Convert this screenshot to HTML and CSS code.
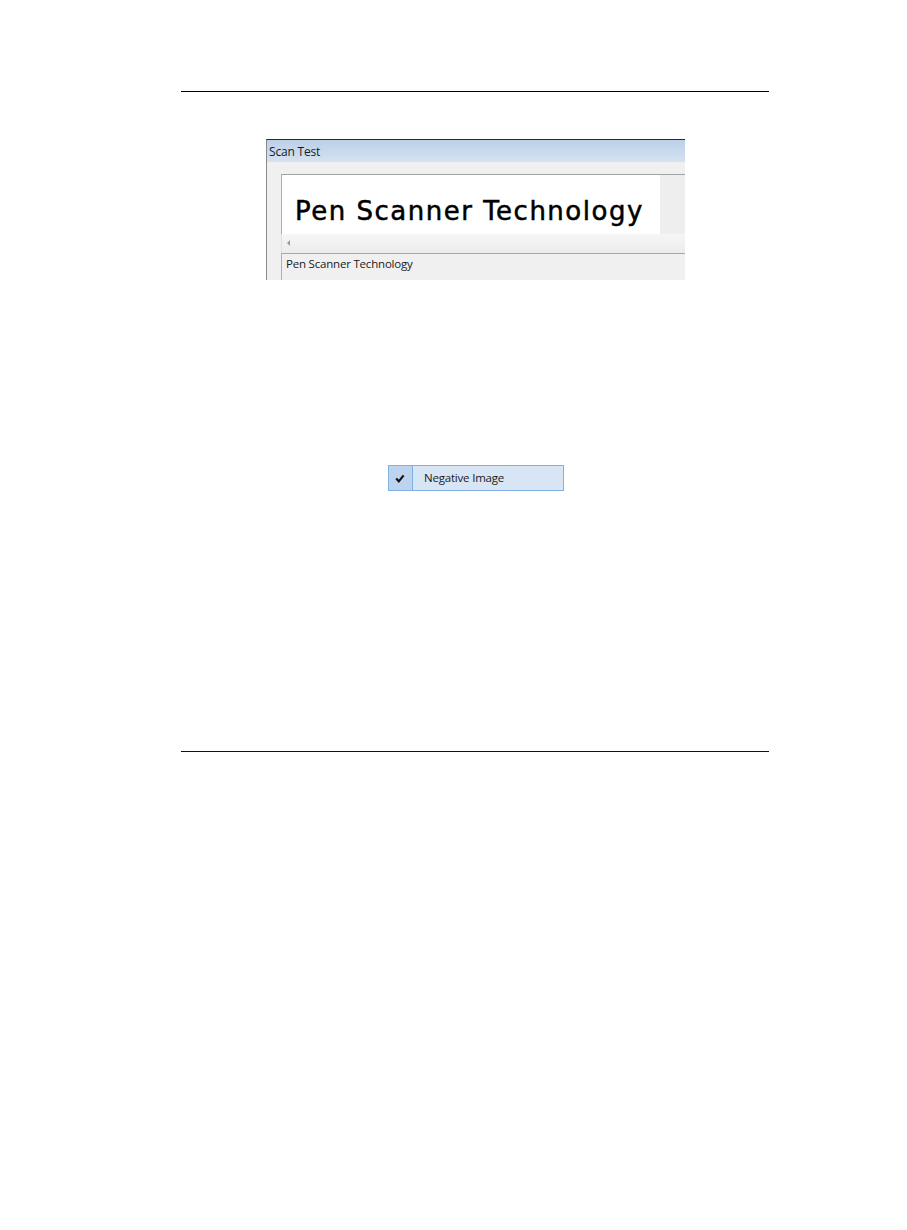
FILE: index.html
```html
<!DOCTYPE html>
<html>
<head>
<meta charset="utf-8">
<link rel="stylesheet" href="styles.css">
</head>
<body>
<div class="page">
  <div class="rule rule-top"></div>
  <div class="shot1">
    <div class="titlebar">Scan Test</div>
    <div class="client">
      <div class="canvas-row">
        <div class="canvas"><span class="bigtext">Pen Scanner Technology</span></div>
        <div class="canvas-rest"></div>
      </div>
      <div class="scrollbar"><span class="arrow"></span></div>
      <div class="result">Pen Scanner Technology</div>
    </div>
  </div>
  <div class="menuitem">
    <div class="check"><svg width="10" height="9" viewBox="0 0 10 9"><path d="M1.2 4.6 L3.8 7.3 L8.6 1.4" fill="none" stroke="#111" stroke-width="2.1"/></svg></div>
    <div class="label">Ne<u>g</u>ative Image</div>
  </div>
  <div class="rule rule-bottom"></div>
</div>
</body>
</html>
```

FILE: styles.css
```css
html, body {
  margin: 0;
  padding: 0;
  background: #fff;
}
.page {
  width: 907px;
  height: 1230px;
  padding-top: 91px;
  box-sizing: border-box;
}
.rule {
  margin-left: 181px;
  width: 588px;
  height: 1px;
  background: #000;
}
.rule-bottom {
  margin-top: 260px;
  background: #14083a;
}
.shot1 {
  margin-top: 47px;
  margin-left: 266px;
  width: 419px;
  height: 141px;
  border-top: 1px solid #2b2b2b;
  border-left: 1px solid #8a8a8a;
  box-sizing: border-box;
  display: flex;
  flex-direction: column;
  overflow: hidden;
}
.titlebar {
  height: 22px;
  box-sizing: border-box;
  padding-top: 2px;
  background: linear-gradient(#bcd0e8, #d5e2f1);
  font-family: "Open Sans", "DejaVu Sans", sans-serif;
  font-size: 12px;
  line-height: 20px;
  color: #1a1a1a;
  padding-left: 2px;
  letter-spacing: -0.2px;
}
.client {
  flex: 1;
  background: #f0f0f0;
  padding-top: 12px;
  padding-left: 14px;
  display: flex;
  flex-direction: column;
}
.canvas-row {
  display: flex;
  height: 59px;
  border-top: 1px solid #a3a3a3;
  border-left: 1px solid #b0b0b0;
}
.canvas {
  width: 378px;
  background: #fff;
  position: relative;
}
.bigtext {
  position: absolute;
  left: 13px;
  top: 21px;
  font-family: "DejaVu Sans", sans-serif;
  font-size: 26px;
  line-height: 30px;
  color: #000;
  letter-spacing: 1.5px;
  white-space: nowrap;
  -webkit-text-stroke: 0.5px #000;
}
.canvas-rest {
  flex: 1;
  background: #eeeeee;
}
.scrollbar {
  height: 19px;
  background: linear-gradient(#f6f6f6, #ececec);
  border-left: 1px solid #e0e0e0;
  position: relative;
}
.arrow {
  position: absolute;
  left: 5px;
  top: 6px;
  width: 0;
  height: 0;
  border-top: 3px solid transparent;
  border-bottom: 3px solid transparent;
  border-right: 3px solid #9a9a9a;
}
.result {
  flex: 1;
  border-top: 1px solid #a8a8a8;
  border-left: 1px solid #b0b0b0;
  background: #f0f0f0;
  font-family: "Open Sans", "DejaVu Sans", sans-serif;
  font-size: 11.5px;
  line-height: 20px;
  padding-left: 4px;
  color: #1a1a1a;
  letter-spacing: -0.2px;
}
.menuitem {
  margin-top: 185px;
  margin-left: 388px;
  width: 176px;
  height: 26px;
  box-sizing: border-box;
  border: 1px solid #7fb1e6;
  background: #d7e5f4;
  display: flex;
  align-items: stretch;
}
.check {
  width: 24px;
  box-sizing: border-box;
  border-right: 1px solid #7fb1e6;
  background: #bcd4ee;
  display: flex;
  align-items: center;
  justify-content: center;
  padding-right: 2px;
}
.label {
  padding-left: 11px;
  font-family: "Open Sans", "DejaVu Sans", sans-serif;
  font-size: 11.5px;
  line-height: 24px;
  color: #1a1a1a;
  letter-spacing: -0.2px;
}
.label u {
  text-underline-offset: 1px;
}
```
